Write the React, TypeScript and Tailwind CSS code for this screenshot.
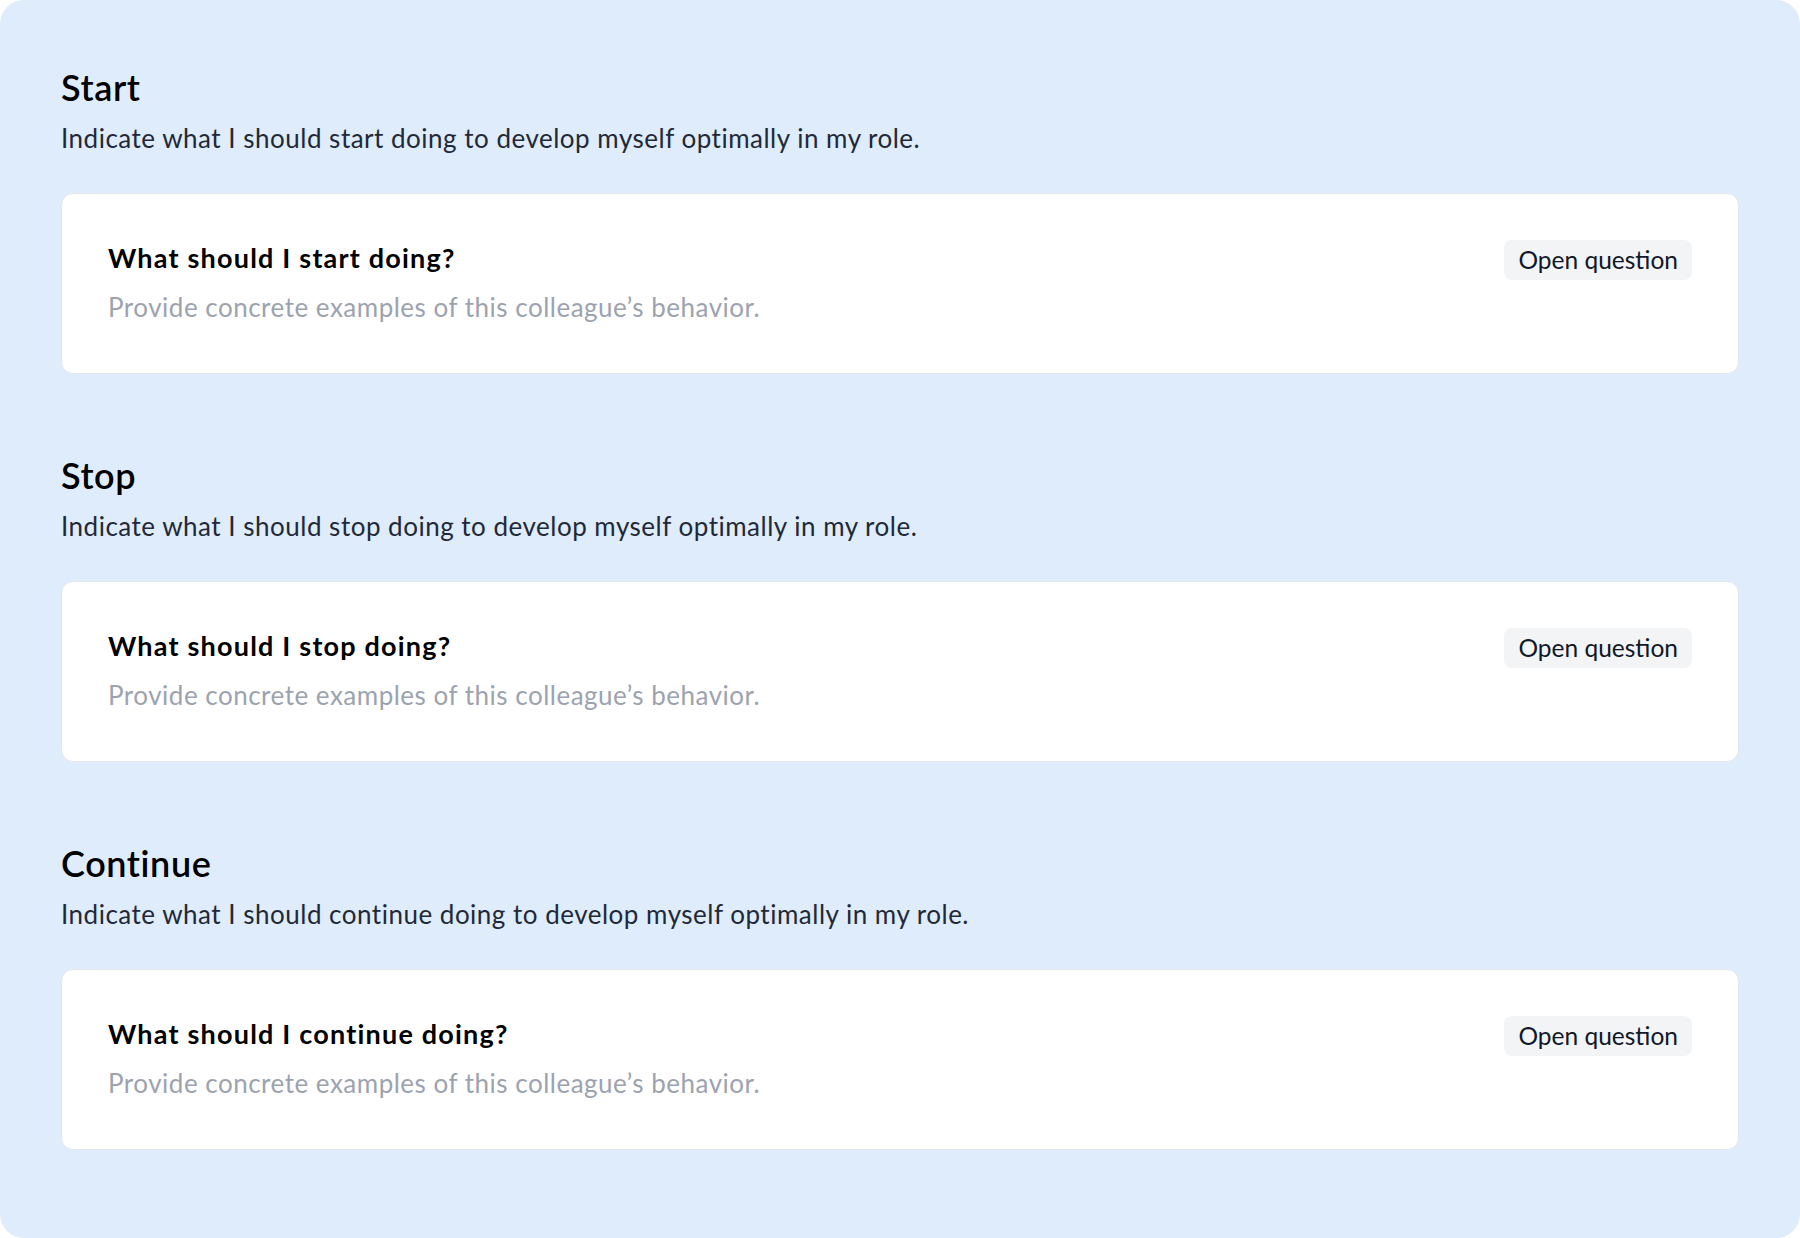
const sections = [
  {
    title: 'Start',
    description: 'Indicate what I should start doing to develop myself optimally in my role.',
    question: 'What should I start doing?',
  },
  {
    title: 'Stop',
    description: 'Indicate what I should stop doing to develop myself optimally in my role.',
    question: 'What should I stop doing?',
  },
  {
    title: 'Continue',
    description: 'Indicate what I should continue doing to develop myself optimally in my role.',
    question: 'What should I continue doing?',
  },
];

function QuestionCard({ question }: { question: string }) {
  return (
    <div className="mt-[39px] rounded-xl border border-[#e3e6ea] bg-white px-[46px] pt-12 pb-[50px]">
      <div className="flex items-start justify-between">
        <div>
          <h3 className="text-[27px] leading-8 font-bold tracking-[1.2px] text-black">{question}</h3>
          <p className="mt-[17px] text-[26px] leading-8 tracking-[0.5px] text-[#9ca3af]">
            Provide concrete examples of this colleague’s behavior.
          </p>
        </div>
        <span className="-mt-0.5 rounded-lg bg-[#f2f4f6] px-3.5 py-1 text-[24.5px] leading-8 text-[#111827]">
          Open question
        </span>
      </div>
    </div>
  );
}

export default function App() {
  return (
    <div className="min-h-screen bg-white" style={{ fontFamily: 'Lato, "Noto Sans", sans-serif' }}>
      <main className="flex min-h-screen flex-col gap-[81px] rounded-3xl bg-[#dfecfc] px-[61px] pt-[67px] pb-[88px]">
        {sections.map(s => (
          <section key={s.title}>
            <h2 className="text-4xl leading-10 font-semibold tracking-[0.6px] text-black">{s.title}</h2>
            <p className="mt-[15px] text-[26px] leading-8 tracking-[0.5px] text-[#1f2937]">{s.description}</p>
            <QuestionCard question={s.question} />
          </section>
        ))}
      </main>
    </div>
  );
}
